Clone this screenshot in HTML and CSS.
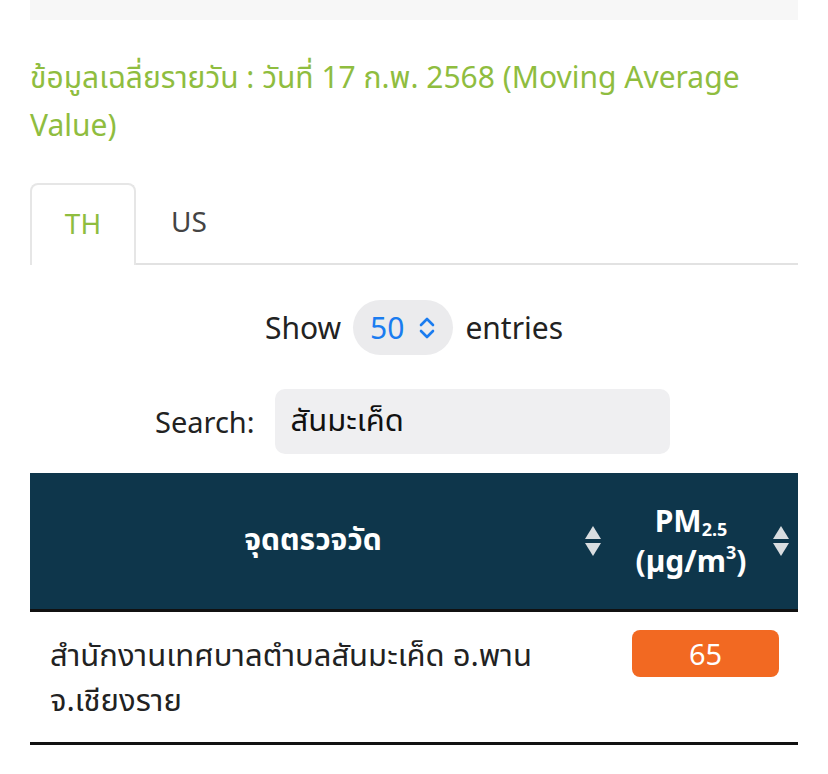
FILE: index.html
```html
<!DOCTYPE html>
<html lang="th">
<head>
<meta charset="utf-8">
<link rel="stylesheet" href="styles.css">
</head>
<body>
<div class="page">
  <div class="topbox"></div>
  <h2 class="title">ข้อมูลเฉลี่ยรายวัน : วันที่ 17 ก.พ. 2568 (Moving Average Value)</h2>
  <div class="tabs">
    <div class="tab active">TH</div>
    <div class="tab">US</div>
    <div class="tab-fill"></div>
  </div>
  <div class="length">
    <span>Show</span>
    <span class="select">50
      <svg class="chev" width="18" height="24" viewBox="0 0 18 24"><path d="M3 9 L9 3 L15 9 M3 15 L9 21 L15 15" fill="none" stroke="#1a7cf0" stroke-width="2.6" stroke-linecap="round" stroke-linejoin="round"/></svg>
    </span>
    <span>entries</span>
  </div>
  <div class="search">
    <span>Search:</span>
    <span class="input">สันมะเค็ด</span>
  </div>
  <table class="tbl">
    <thead>
      <tr>
        <th class="c1"><div class="th-in"><span class="th-text">จุดตรวจวัด</span><span class="sort"><svg width="18" height="32" viewBox="0 0 18 32"><path d="M9 1 L17 14 L1 14 Z" fill="#d9dde0"/><path d="M9 31 L17 18 L1 18 Z" fill="#d9dde0"/></svg></span></div></th>
        <th class="c2"><div class="th-in"><span class="th-text">PM<sub>2.5</sub><br>(µg/m<sup>3</sup>)</span><span class="sort"><svg width="18" height="32" viewBox="0 0 18 32"><path d="M9 1 L17 14 L1 14 Z" fill="#d9dde0"/><path d="M9 31 L17 18 L1 18 Z" fill="#d9dde0"/></svg></span></div></th>
      </tr>
    </thead>
    <tbody>
      <tr>
        <td class="name">สำนักงานเทศบาลตำบลสันมะเค็ด อ.พาน จ.เชียงราย</td>
        <td class="val"><span class="badge">65</span></td>
      </tr>
    </tbody>
  </table>
</div>
</body>
</html>
```
FILE: styles.css
```css
html, body { margin: 0; padding: 0; background: #fff; }
body { font-family: "Noto Sans", "Noto Sans Thai", "Liberation Sans", sans-serif; color: #222; }
.page { padding: 0 30px; }
.topbox { height: 20px; background: #f7f7f7; }
.title {
  margin: 33px 0 0;
  font-size: 30px;
  font-weight: 400;
  line-height: 48px;
  color: #8fbd3f;
}
.tabs { display: flex; margin-top: 34px; height: 82px; }
.tab {
  width: 106px;
  display: flex; align-items: center; justify-content: center;
  font-size: 28px; color: #444;
  border-bottom: 2px solid #e2e2e2;
  box-sizing: border-box;
  padding-bottom: 4px;
}
.tab.active {
  color: #8fbd3f;
  border: 2px solid #e6e6e6;
  border-bottom: none;
  border-radius: 8px 8px 0 0;
}
.tab-fill { flex: 1; border-bottom: 2px solid #e2e2e2; }
.length {
  display: flex; align-items: center; justify-content: center; gap: 12px;
  margin-top: 35px; height: 55px;
  font-size: 30px; color: #222;
}
.select {
  display: inline-flex; align-items: center; gap: 14px;
  height: 55px; padding: 0 17px;
  background: #ebebed; border-radius: 28px;
  color: #1a7cf0;
}
.chev { display: block; }
.search {
  display: flex; align-items: center;
  margin-top: 34px;
  padding-left: 125px;
  font-size: 29px; color: #222;
  gap: 20px;
}
.input {
  width: 395px; height: 65px; box-sizing: border-box;
  background: #efeff1; border-radius: 10px;
  padding-left: 16px; display: flex; align-items: center;
  font-size: 31px; color: #111;
}
.tbl {
  width: 100%; margin-top: 19px;
  border-collapse: collapse;
}
.tbl th {
  background: #0e364b; color: #fff;
  height: 136px; font-size: 30px; font-weight: 700;
  border-bottom: 3px solid #111;
  padding: 0;
}
.th-in { display: flex; align-items: center; justify-content: center; }
.c1 { width: 582px; }
.c1 .th-text { flex: 1; text-align: center; padding-left: 20px; }
.sort { display: flex; padding: 0 10px 0 8px; }
.c2 .th-text { flex: 1; text-align: center; line-height: 40px; padding-left: 6px; }
.c2 .sort { padding-right: 8px; }
.tbl sub { font-size: 18px; vertical-align: -4px; line-height: 0; }
.tbl sup { font-size: 18px; vertical-align: 13px; line-height: 0; }
.tbl td {
  border-bottom: 3px solid #111;
  vertical-align: top;
  padding: 20px 20px 20px;
  font-size: 31px; line-height: 45px; color: #222;
}
.val { text-align: center; padding: 18px 19px 0 20px !important; }
.badge {
  display: block;
  height: 47px; line-height: 47px;
  background: #f26922; color: #fff;
  border-radius: 8px;
  font-size: 29px;
}
```
